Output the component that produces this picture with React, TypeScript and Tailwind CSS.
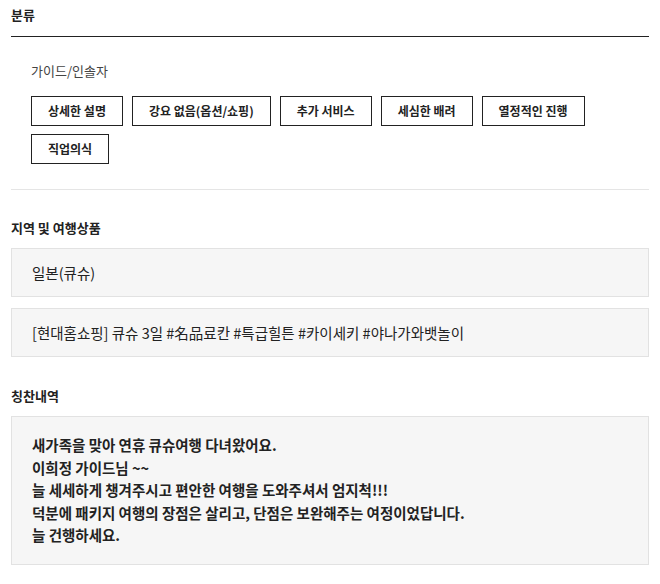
const TAGS = ["상세한 설명", "강요 없음(옵션/쇼핑)", "추가 서비스", "세심한 배려", "열정적인 진행", "직업의식"];

const LINES = [
  "새가족을 맞아 연휴 큐슈여행 다녀왔어요.",
  "이희정 가이드님 ~~",
  "늘 세세하게 챙겨주시고 편안한 여행을 도와주셔서 엄지척!!!",
  "덕분에 패키지 여행의 장점은 살리고, 단점은 보완해주는 여정이었답니다.",
  "늘 건행하세요.",
];

export default function App() {
  return (
    <div
      className="min-h-[584px] bg-white px-[11px] text-[#222]"
      style={{ fontFamily: '"Noto Sans CJK KR", "Noto Sans", sans-serif' }}
    >
      <h2 className="border-b border-[#222] pt-[6px] pb-[12px] text-[13px] font-bold leading-[18px]">분류</h2>

      <div className="border-b border-[#e5e5e5] pt-[24px] pb-[25px] pl-[20px]">
        <p className="text-[13px] leading-[20px] text-[#444]">가이드/인솔자</p>
        <ul className="mt-[15px] flex flex-wrap gap-x-[9px] gap-y-[8px]">
          {TAGS.map((t) => (
            <li
              key={t}
              className="flex h-[30px] items-center border border-[#222] px-[16px] text-[12px] font-bold"
            >
              {t}
            </li>
          ))}
        </ul>
      </div>

      <h3 className="pt-[29px] text-[13px] font-bold leading-[18px]">지역 및 여행상품</h3>
      <div className="mt-[11px] flex flex-col gap-[11px]">
        <div className="flex h-[49px] items-center border border-[#e2e2e2] bg-[#f6f6f6] px-[20px] text-[14.5px]">
          일본(큐슈)
        </div>
        <div className="flex h-[49px] items-center border border-[#e2e2e2] bg-[#f6f6f6] px-[20px] text-[14.5px]">
          [현대홈쇼핑] 큐슈 3일 #名品료칸 #특급힐튼 #카이세키 #야나가와뱃놀이
        </div>
      </div>

      <h3 className="pt-[30px] text-[13px] font-bold leading-[18px]">칭찬내역</h3>
      <div className="mt-[11px] h-[149px] border border-[#e2e2e2] bg-[#f6f6f6] px-[20px] pt-[17px]">
        {LINES.map((l) => (
          <p key={l} className="text-[14.5px] font-semibold leading-[22.5px]">
            {l}
          </p>
        ))}
      </div>
    </div>
  );
}
